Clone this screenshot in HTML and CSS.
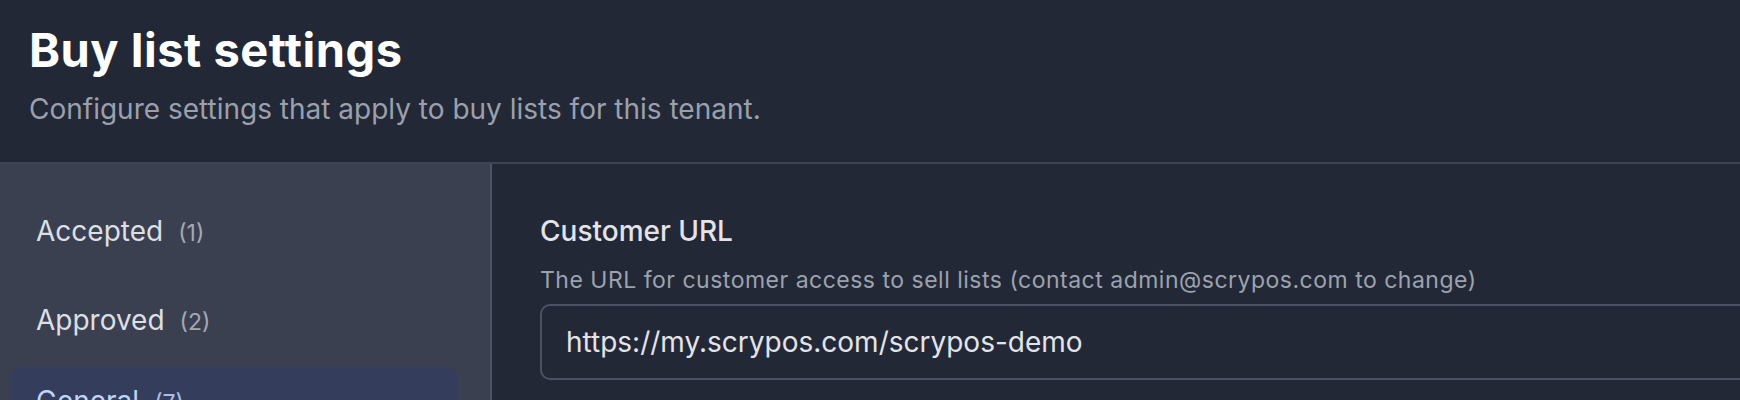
FILE: index.html
```html
<!DOCTYPE html>
<html lang="en">
<head>
<meta charset="utf-8">
<title>Buy list settings</title>
<link rel="stylesheet" href="styles.css">
</head>
<body>
<header class="page-header">
  <h1 class="page-title">Buy list settings</h1>
  <p class="page-subtitle">Configure settings that apply to buy lists for this tenant.</p>
</header>
<div class="layout">
  <nav class="sidebar">
    <a class="nav-item nav-item--first" href="#">Accepted<span class="count">(1)</span></a>
    <a class="nav-item" href="#">Approved<span class="count">(2)</span></a>
    <a class="nav-item nav-item--active" href="#">General<span class="count">(7)</span></a>
  </nav>
  <main class="content">
    <div class="field">
      <label class="field-label" for="customer-url">Customer URL</label>
      <p class="field-help">The URL for customer access to sell lists (contact admin@scrypos.com to change)</p>
      <div class="input" id="customer-url">https://my.scrypos.com/scrypos-demo</div>
    </div>
  </main>
</div>
</body>
</html>
```

FILE: styles.css
```css
* { box-sizing: border-box; }

html, body {
  margin: 0;
  padding: 0;
  background: #222836;
  font-family: Inter, "Noto Sans", "Liberation Sans", sans-serif;
  overflow: hidden;
  height: 400px;
}

.page-header {
  padding: 23px 29px 33px;
  border-bottom: 2px solid #3e4454;
}

.page-title {
  margin: 0;
  font-size: 47px;
  line-height: 54px;
  font-weight: 700;
  color: #ffffff;
  letter-spacing: 0.5px;
}

.page-subtitle {
  margin: 12px 0 0;
  font-size: 28px;
  line-height: 40px;
  font-weight: 400;
  color: #9aa0ad;
}

.layout {
  display: flex;
  height: 236px;
}

.sidebar {
  flex: 0 0 492px;
  background: #3b4050;
  border-right: 2px solid #4d5363;
  padding: 33px 33px 0 12px;
  display: flex;
  flex-direction: column;
  overflow: hidden;
}

.nav-item {
  display: flex;
  align-items: baseline;
  padding: 14px 24px;
  font-size: 28px;
  line-height: 40px;
  color: #dcdfe5;
  text-decoration: none;
  border-radius: 10px;
  margin-bottom: 11px;
  flex: 0 0 auto;
}

.nav-item--first { margin-bottom: 19px; }

.nav-item--active {
  background: #353d5c;
  color: #c0d4f8;
}

.count {
  margin-left: 15px;
  font-size: 23px;
  color: #a3a8b4;
}

.nav-item--active .count { color: #a9bde6; }

.content {
  flex: 1 1 auto;
  min-width: 0;
  padding: 47px 0 0 48px;
  overflow: hidden;
}

.field-label {
  display: block;
  font-size: 28px;
  line-height: 40px;
  font-weight: 500;
  color: #e2e4e9;
}

.field-help {
  margin: 13px 0 0;
  font-size: 23px;
  line-height: 32px;
  letter-spacing: 0.5px;
  color: #9ca3af;
}

.input {
  margin-top: 8px;
  width: 1400px;
  height: 76px;
  border: 2px solid #4b5263;
  border-radius: 10px;
  padding: 16px 24px;
  font-size: 28px;
  line-height: 40px;
  color: #e2e4ea;
}
```
